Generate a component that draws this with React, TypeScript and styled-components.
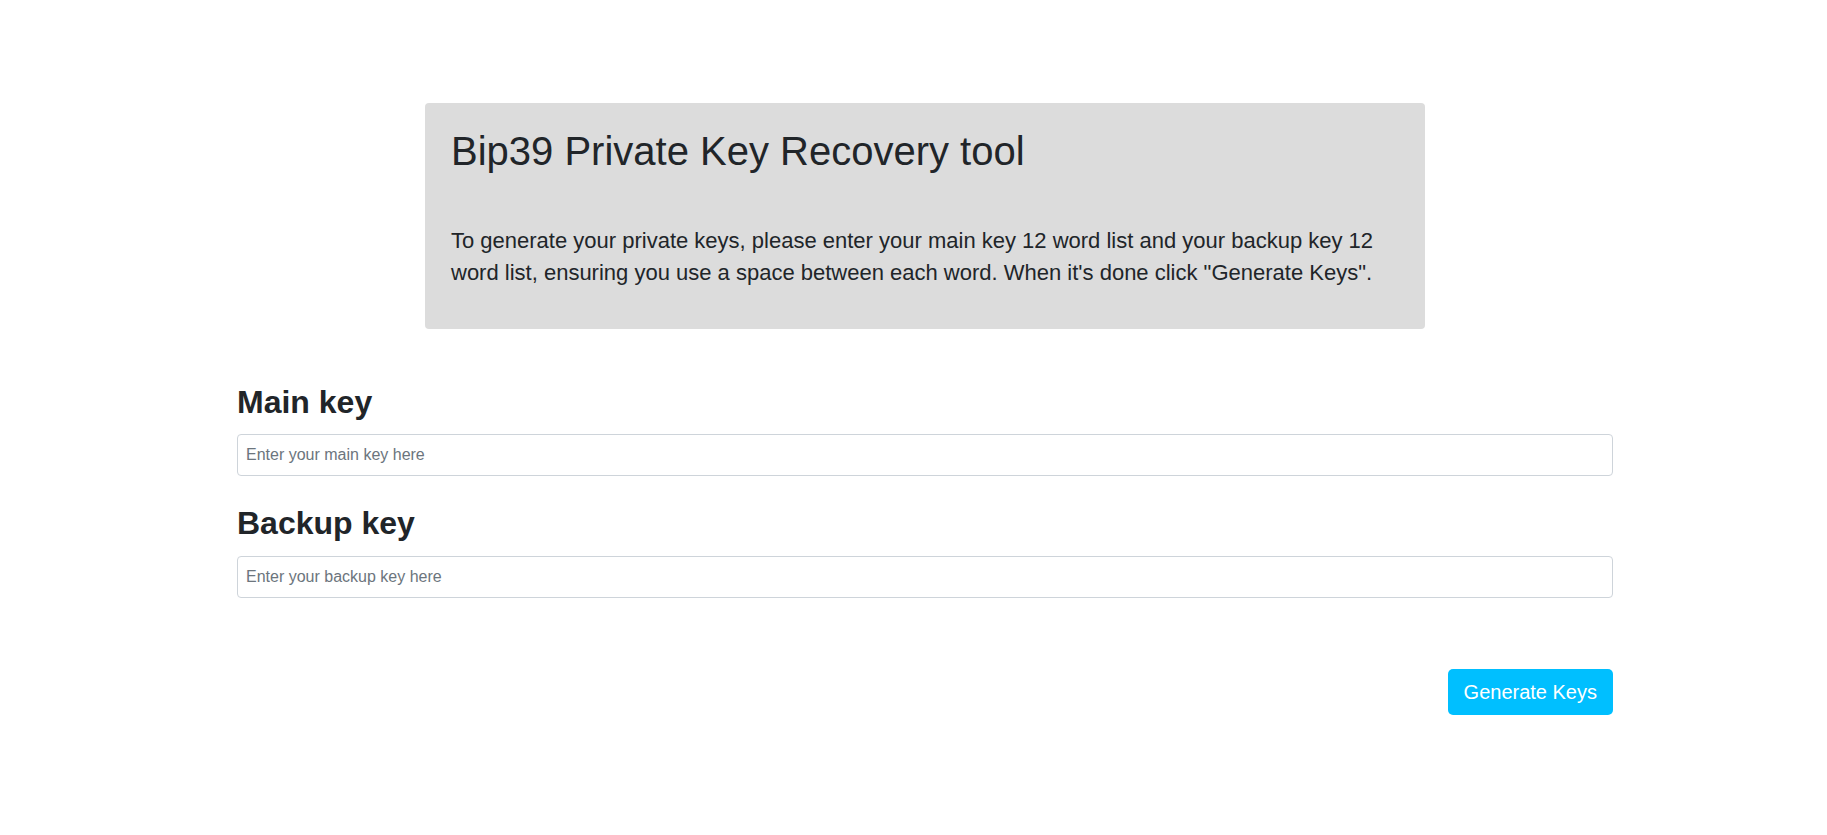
import React from "react";
import styled, { createGlobalStyle } from "styled-components";

const Global = createGlobalStyle`
  html, body { margin: 0; padding: 0; background: #ffffff; }
  body {
    font-family: "Liberation Sans", Arial, sans-serif;
    color: #212529;
  }
  * { box-sizing: border-box; }
`;

const Page = styled.main`
  padding: 103px 0 60px 23px;
  display: flex;
  flex-direction: column;
  align-items: center;
`;

const Intro = styled.section`
  width: 1000px;
  background: #dcdcdc;
  border-radius: 4px;
  padding: 24px 26px 24px;
`;

const Title = styled.h1`
  margin: 0 0 50px;
  font-size: 40px;
  font-weight: 400;
  line-height: 1.2;
`;

const Lead = styled.p`
  margin: 0 0 16px;
  font-size: 22px;
  line-height: 32px;
`;

const Form = styled.form`
  width: 1376px;
  margin-top: 54px;
  display: flex;
  flex-direction: column;
`;

const Field = styled.div<{ $gap?: number }>`
  display: flex;
  flex-direction: column;
  margin-bottom: ${(p) => p.$gap ?? 0}px;
`;

const Label = styled.label`
  font-size: 32px;
  font-weight: 700;
  line-height: 1.2;
  margin-bottom: 13px;
`;

const Input = styled.input`
  height: 42px;
  width: 100%;
  padding: 0 8px;
  font-family: "Liberation Sans", Arial, sans-serif;
  font-size: 16px;
  color: #495057;
  background: #fff;
  border: 1px solid #ced4da;
  border-radius: 4px;
  outline: none;
  &::placeholder { color: #6c757d; opacity: 1; }
`;

const Actions = styled.div`
  display: flex;
  justify-content: flex-end;
  margin-top: 71px;
`;

const Button = styled.button`
  background: #00bfff;
  color: #fff;
  border: none;
  border-radius: 5px;
  padding: 8px 16px;
  font-family: "Liberation Sans", Arial, sans-serif;
  font-size: 20px;
  line-height: 30px;
  cursor: pointer;
`;

export default function App() {
  return (
    <>
      <Global />
      <Page>
        <Intro>
          <Title>Bip39 Private Key Recovery tool</Title>
          <Lead>
            To generate your private keys, please enter your main key 12 word list and your backup key 12
            word list, ensuring you use a space between each word. When it's done click "Generate Keys".
          </Lead>
        </Intro>
        <Form onSubmit={(e) => e.preventDefault()}>
          <Field $gap={28}>
            <Label htmlFor="main">Main key</Label>
            <Input id="main" placeholder="Enter your main key here" />
          </Field>
          <Field>
            <Label htmlFor="backup">Backup key</Label>
            <Input id="backup" placeholder="Enter your backup key here" />
          </Field>
          <Actions>
            <Button type="submit">Generate Keys</Button>
          </Actions>
        </Form>
      </Page>
    </>
  );
}
